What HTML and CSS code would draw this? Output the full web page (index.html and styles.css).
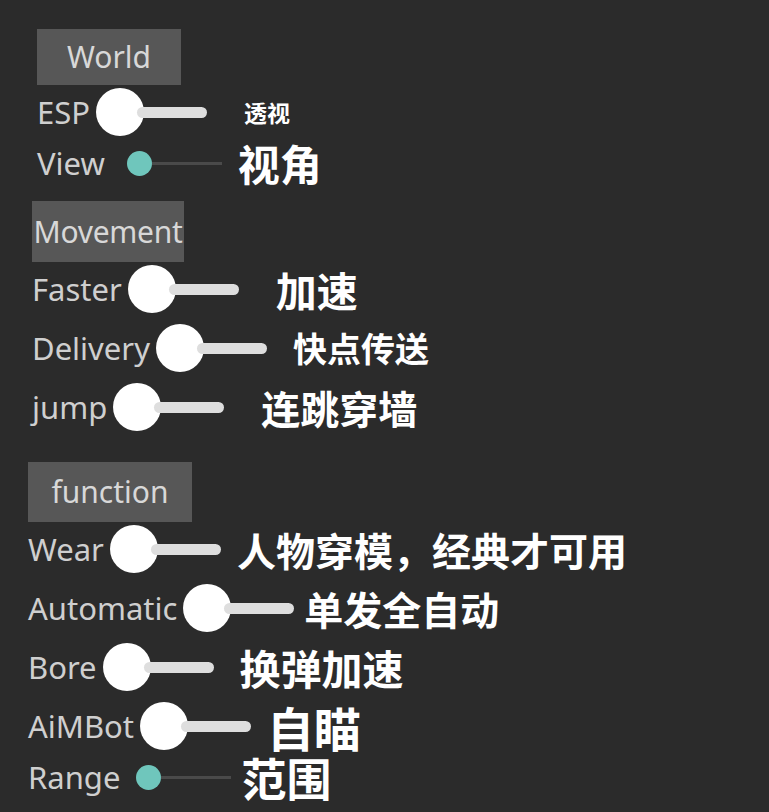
FILE: index.html
```html
<!DOCTYPE html>
<html lang="zh-CN">
<head>
  <meta charset="UTF-8">
  <meta name="viewport" content="width=device-width, initial-scale=1.0">
  <title>Menu</title>
  <link rel="stylesheet" href="styles.css">
</head>
<body>
  <div class="menu">

    <div class="section world">
      <div class="tab tab-world">World</div>
      <div class="row">
        <span class="label">ESP</span>
        <div class="switch"><span class="knob"></span><span class="track"></span></div>
        <span class="note note-sm gap-l">透视</span>
      </div>
      <div class="row row-thin">
        <span class="label">View</span>
        <div class="seek"><span class="dot"></span><span class="line"></span></div>
        <span class="note note-lg gap-s">视角</span>
      </div>
    </div>

    <div class="section movement">
      <div class="tab tab-movement">Movement</div>
      <div class="row">
        <span class="label">Faster</span>
        <div class="switch"><span class="knob"></span><span class="track"></span></div>
        <span class="note note-wide gap-l">加速</span>
      </div>
      <div class="row">
        <span class="label">Delivery</span>
        <div class="switch"><span class="knob"></span><span class="track"></span></div>
        <span class="note note-md gap-m">快点传送</span>
      </div>
      <div class="row">
        <span class="label">jump</span>
        <div class="switch"><span class="knob"></span><span class="track"></span></div>
        <span class="note gap-l">连跳穿墙</span>
      </div>
    </div>

    <div class="section function">
      <div class="tab tab-function">function</div>
      <div class="row">
        <span class="label">Wear</span>
        <div class="switch"><span class="knob"></span><span class="track"></span></div>
        <span class="note gap-s">人物穿模，经典才可用</span>
      </div>
      <div class="row">
        <span class="label">Automatic</span>
        <div class="switch"><span class="knob"></span><span class="track"></span></div>
        <span class="note gap-xs">单发全自动</span>
      </div>
      <div class="row">
        <span class="label">Bore</span>
        <div class="switch"><span class="knob"></span><span class="track"></span></div>
        <span class="note note-wide gap-m">换弹加速</span>
      </div>
      <div class="row">
        <span class="label">AiMBot</span>
        <div class="switch"><span class="knob"></span><span class="track"></span></div>
        <span class="note note-xxl gap-s">自瞄</span>
      </div>
      <div class="row row-thin">
        <span class="label">Range</span>
        <div class="seek seek-tight"><span class="dot"></span><span class="line"></span></div>
        <span class="note note-xl gap-xs">范围</span>
      </div>
    </div>

  </div>
</body>
</html>
```

FILE: styles.css
```css
html,
body {
  height: 100%;
}
body {
  margin: 0;
  background-color: #2b2b2b;
  font-family: "Noto Sans", "Noto Sans CJK SC", sans-serif;
  overflow: hidden;
}
.menu {
  padding: 29px 0 0 28px;
}
.section {
  display: flex;
  flex-direction: column;
  gap: 11px;
  align-items: flex-start;
}
.world {
  padding-left: 9px;
}
.movement {
  padding-left: 4px;
  margin-top: 22px;
}
.function {
  margin-top: 31px;
}
.tab {
  background-color: #575757;
  color: #d8d8d8;
  font-size: 30px;
  text-align: center;
  box-sizing: border-box;
  margin-bottom: -8px;
}
.tab-world {
  width: 144px;
  height: 56px;
  line-height: 56px;
}
.tab-movement {
  width: 152px;
  height: 61px;
  line-height: 61px;
  letter-spacing: -0.3px;
}
.tab-function {
  width: 164px;
  height: 60px;
  line-height: 60px;
}
.row {
  display: flex;
  align-items: center;
  height: 48px;
}
.row-thin {
  height: 32px;
}
.label {
  color: #cfcfcf;
  font-size: 31px;
  margin-right: 6px;
}

/* switch: white knob at the start of a light bar */
.switch {
  display: flex;
  align-items: center;
  width: 111px;
}
.knob {
  width: 48px;
  height: 48px;
  border-radius: 50%;
  background-color: #ffffff;
  flex-shrink: 0;
}
.track {
  width: 70px;
  height: 11px;
  margin-left: -7px;
  border-radius: 6px;
  background-color: #dedede;
}

/* seek bar: small teal dot on a thin dark line */
.seek {
  display: flex;
  align-items: center;
  width: 95px;
  margin-left: 16px;
}
.seek-tight {
  margin-left: 10px;
}
.dot {
  width: 25px;
  height: 25px;
  border-radius: 50%;
  background-color: #6fc6bc;
  flex-shrink: 0;
}
.line {
  flex: 1;
  height: 3px;
  background-color: #4a4a4a;
}

.note {
  color: #ffffff;
  font-family: "Noto Sans CJK SC", sans-serif;
  font-weight: bold;
  font-size: 39px;
  line-height: 1;
  white-space: nowrap;
}
.note-sm {
  font-size: 23px;
}
.note-md {
  font-size: 34px;
}
.note-wide {
  font-size: 41px;
}
.note-lg {
  font-size: 42px;
}
.note-xl {
  font-size: 45px;
}
.note-xxl {
  font-size: 47px;
}
.gap-xs {
  margin-left: 10px;
}
.gap-s {
  margin-left: 16px;
}
.gap-m {
  margin-left: 26px;
}
.gap-l {
  margin-left: 37px;
}
```
